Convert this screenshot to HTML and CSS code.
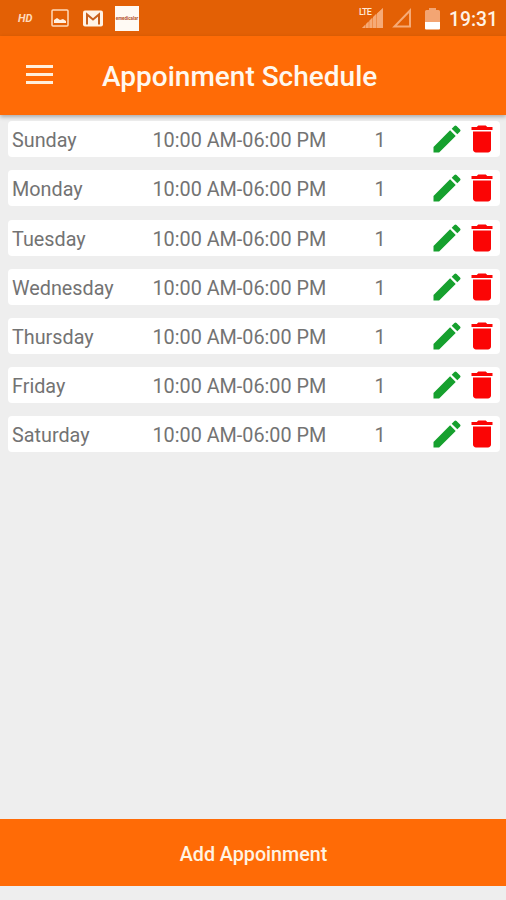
FILE: index.html
```html
<!DOCTYPE html>
<html lang="en">
<head>
<meta charset="utf-8">
<title>Appoinment Schedule</title>
<link rel="stylesheet" href="styles.css">
</head>
<body>
<svg class="sprite" aria-hidden="true">
  <symbol id="pencil" viewBox="0 0 24 24"><path d="M3 17.25V21h3.75L17.81 9.94l-3.75-3.75L3 17.25zM20.71 7.04a1 1 0 0 0 0-1.41l-2.34-2.34a1 1 0 0 0-1.41 0l-1.83 1.83 3.75 3.75 1.83-1.83z"/></symbol>
  <symbol id="trash" viewBox="0 0 24 24"><path d="M6 19c0 1.1.9 2 2 2h8c1.1 0 2-.9 2-2V7H6v12zM19 4h-3.500l-1-1h-5l-1 1H5v2h14V4z"/></symbol>
</svg>
<div class="screen">
  <header class="status">
    <div class="notices">
      <span class="hd">HD</span>
      <svg class="picture" viewBox="0 0 18 18"><rect x="1" y="1" width="16" height="16" rx="1"/><path d="M3 14v-3l3-2 3 2 3-1 3 2v2z"/></svg>
      <svg class="mail" viewBox="0 0 20 16"><rect width="20" height="16" rx="2"/><path d="M4 14V4l6 5 6-5v10"/></svg>
      <span class="app">emedicalar</span>
    </div>
    <div class="system">
      <svg class="signal" viewBox="0 0 24 22"><path d="M3 21h3v-3zM7 21h2.500v-6.500L7 17zM10.500 21H13V11l-2.500 2.500zM14 21h3V7l-3 3zM18 21h6V1l-6 5.500z"/><path class="haze" d="M3 21h21V1z"/><text x="0" y="8">LTE</text></svg>
      <svg class="empty" viewBox="0 0 20 20"><path d="M2.500 18.500h15.500V2.500z"/></svg>
      <svg class="battery" viewBox="0 0 15 23"><path class="cell" d="M1.500 3H4V1h7v2h2.500Q15 3 15 4.500V15H0V4.500Q0 3 1.500 3z"/><path d="M0 15h15v6.500q0 1-1 1H1q-1 0-1-1z"/></svg>
      <span class="clock">19:31</span>
    </div>
  </header>
  <div class="toolbar">
    <div class="menu"><i></i><i></i><i></i></div>
    <h1>Appoinment Schedule</h1>
  </div>
  <main class="list">
    <div class="row"><span class="day">Sunday</span><span class="time">10:00 AM-06:00 PM</span><span class="count">1</span><svg class="edit"><use href="#pencil"/></svg><svg class="delete"><use href="#trash"/></svg></div>
    <div class="row"><span class="day">Monday</span><span class="time">10:00 AM-06:00 PM</span><span class="count">1</span><svg class="edit"><use href="#pencil"/></svg><svg class="delete"><use href="#trash"/></svg></div>
    <div class="row"><span class="day">Tuesday</span><span class="time">10:00 AM-06:00 PM</span><span class="count">1</span><svg class="edit"><use href="#pencil"/></svg><svg class="delete"><use href="#trash"/></svg></div>
    <div class="row"><span class="day">Wednesday</span><span class="time">10:00 AM-06:00 PM</span><span class="count">1</span><svg class="edit"><use href="#pencil"/></svg><svg class="delete"><use href="#trash"/></svg></div>
    <div class="row"><span class="day">Thursday</span><span class="time">10:00 AM-06:00 PM</span><span class="count">1</span><svg class="edit"><use href="#pencil"/></svg><svg class="delete"><use href="#trash"/></svg></div>
    <div class="row"><span class="day">Friday</span><span class="time">10:00 AM-06:00 PM</span><span class="count">1</span><svg class="edit"><use href="#pencil"/></svg><svg class="delete"><use href="#trash"/></svg></div>
    <div class="row"><span class="day">Saturday</span><span class="time">10:00 AM-06:00 PM</span><span class="count">1</span><svg class="edit"><use href="#pencil"/></svg><svg class="delete"><use href="#trash"/></svg></div>
  </main>
  <button class="add">Add Appoinment</button>
</div>
</body>
</html>
```
FILE: styles.css
```css
* { box-sizing: border-box; }
body { margin: 0; font-family: Roboto, sans-serif; }
.sprite { display: none; }
.screen { display: flex; flex-direction: column; height: 900px; padding-bottom: 14px; background: #eee; overflow: hidden; }
svg { display: block; flex: none; }

.status { display: flex; justify-content: space-between; flex: none; height: 36px; padding: 0 8px 0 18px; background: #e36005; color: #fff3e6; }
.notices, .system { display: flex; align-items: center; }
.hd { width: 33px; font-size: 11px; font-weight: 700; font-style: italic; color: #ffd9bb; }
.picture { width: 18px; height: 18px; margin-right: 14px; fill: #fff0e2; }
.picture rect { fill: none; stroke: #ffd9bb; stroke-width: 1.5; }
.mail { width: 20px; height: 17px; margin-right: 12px; fill: #fff3e6; }
.mail path { fill: none; stroke: #c8611d; stroke-width: 2; }
.app { width: 24px; height: 25px; background: #fffaf4; color: #b3532a; font-size: 4.5px; line-height: 25px; font-weight: 700; text-align: center; overflow: hidden; }
.signal { width: 24px; height: 22px; margin-right: 9px; fill: #f6aa76; overflow: visible; }
.signal .haze { opacity: .6; }
.signal text { font-size: 9px; font-weight: 500; letter-spacing: -.7px; fill: #ffe9d6; }
.empty { width: 20px; height: 20px; margin-right: 13px; fill: none; stroke: #f6aa76; stroke-width: 2; }
.battery { width: 15px; height: 23px; margin-right: 9px; fill: #fff; }
.battery .cell { fill: #f3a573; }
.clock { font-size: 19.3px; font-weight: 500; line-height: 36px; padding-top: 3px; }

.toolbar { display: flex; align-items: center; flex: none; height: 79px; padding-left: 26px; background: #ff6b06; box-shadow: 0 2px 4px rgba(0, 0, 0, .28); }
.menu { display: flex; flex-direction: column; gap: 5px; width: 76px; margin-top: -2px; }
.menu i { width: 27px; height: 3px; background: #ffefdc; }
h1 { margin: 3px 0 0; color: #fff8ee; font-size: 28px; font-weight: 500; line-height: 34px; white-space: nowrap; }

.list { display: flex; flex-direction: column; flex: 1; gap: 13.2px; padding: 6.2px 6px 0 8px; }
.row { display: grid; grid-template-columns: 140.500px 222px 54px 35px 36px; flex: none; height: 36px; padding-left: 4px; background: #fff; border-radius: 4px; color: #737373; font-size: 19.8px; line-height: 39px; white-space: nowrap; }
.row svg { width: 36px; height: 36px; }
.edit { fill: #16a02e; }
.delete { fill: #fb0505; }

.add { flex: none; height: 67px; padding: 3px 0 0 1px; border: 0; background: #ff6b06; color: #fff3e2; font: 500 19.7px Roboto, sans-serif; }
```
